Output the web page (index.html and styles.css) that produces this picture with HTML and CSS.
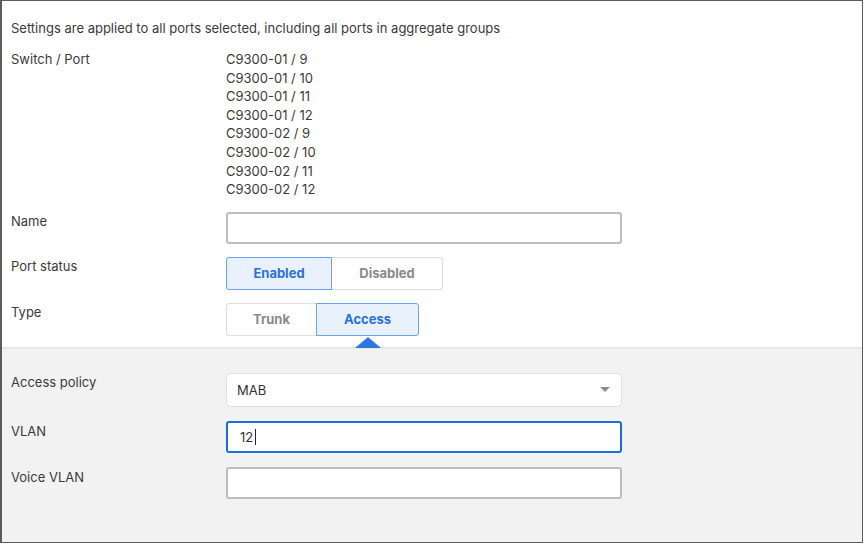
FILE: index.html
```html
<!DOCTYPE html>
<html lang="en">

<head>
    <meta charset="UTF-8">
    <meta name="viewport" content="width=device-width, initial-scale=1.0">
    <title>Port settings</title>
    <link rel="stylesheet" href="styles.css">
</head>

<body>
    <div class="frame">
        <div class="top">
            <p class="note">Settings are applied to all ports selected, including all ports in aggregate groups</p>

            <div class="row ports-row">
                <div class="label">Switch / Port</div>
                <ul class="ports">
                    <li>C9300-01 / 9</li>
                    <li>C9300-01 / 10</li>
                    <li>C9300-01 / 11</li>
                    <li>C9300-01 / 12</li>
                    <li>C9300-02 / 9</li>
                    <li>C9300-02 / 10</li>
                    <li>C9300-02 / 11</li>
                    <li>C9300-02 / 12</li>
                </ul>
            </div>

            <div class="row">
                <div class="label">Name</div>
                <input type="text" class="field">
            </div>

            <div class="row">
                <div class="label">Port status</div>
                <div class="segmented">
                    <button type="button" class="seg seg-enabled active">Enabled</button>
                    <button type="button" class="seg seg-disabled">Disabled</button>
                </div>
            </div>

            <div class="row type-row">
                <div class="label">Type</div>
                <div class="segmented">
                    <button type="button" class="seg seg-trunk">Trunk</button>
                    <button type="button" class="seg seg-access active">Access<span class="pointer"></span></button>
                </div>
            </div>
        </div>

        <div class="bottom">
            <div class="row">
                <div class="label">Access policy</div>
                <div class="select">
                    <span>MAB</span>
                    <span class="caret"></span>
                </div>
            </div>

            <div class="row vlan-row">
                <div class="label">VLAN</div>
                <div class="field-wrap">
                    <input type="text" class="field focused" value="12">
                    <span class="cursor"></span>
                </div>
            </div>

            <div class="row voice-row">
                <div class="label">Voice VLAN</div>
                <input type="text" class="field">
            </div>
        </div>
    </div>
</body>

</html>
```

FILE: styles.css
```css
body {
    margin: 0;
    font-family: Inter, "Noto Sans", sans-serif;
    font-size: 13px;
    color: #3a3a3a;
    background: #fff;
}

.frame {
    width: 863px;
    height: 543px;
    box-sizing: border-box;
    border: 1px solid #5c5c5c;
    border-left-width: 2px;
    display: flex;
    flex-direction: column;
}

.top {
    background: #fff;
    padding: 18px 0 0 9px;
}

.note {
    margin: 0 0 12px;
    line-height: 19px;
}

.row {
    display: grid;
    grid-template-columns: 215px 396px;
    align-items: start;
    margin-bottom: 13px;
}

.label {
    line-height: 19px;
}

.ports-row {
    margin-bottom: 13px;
}

.ports {
    list-style: none;
    margin: 0;
    padding: 0;
    line-height: 18.6px;
}

.field {
    width: 100%;
    height: 32px;
    box-sizing: border-box;
    border: 2px solid #bdbdbd;
    border-radius: 3px;
    background: #fff;
    padding: 0 12px;
    font-family: inherit;
    font-size: 13px;
    color: #333;
    outline: none;
}

.field.focused {
    border-color: #1d6fe0;
}

.segmented {
    display: flex;
    height: 33px;
}

.seg {
    position: relative;
    box-sizing: border-box;
    height: 33px;
    border: 1px solid #dedede;
    background: #fff;
    font-family: inherit;
    font-size: 13px;
    font-weight: 700;
    color: #8a8a8a;
    padding: 0;
}

.seg-enabled {
    width: 106px;
    border-radius: 3px 0 0 3px;
}

.seg-disabled {
    width: 111px;
    border-left: none;
    border-radius: 0 3px 3px 0;
}

.seg-trunk {
    width: 90px;
    border-right: none;
    border-radius: 3px 0 0 3px;
}

.seg-access {
    width: 103px;
    border-radius: 0 3px 3px 0;
}

.seg.active {
    background: #e9f1fd;
    border: 1px solid #6aa2eb;
    color: #2a72d8;
}

.pointer {
    position: absolute;
    left: 50%;
    bottom: -13px;
    margin-left: -13px;
    border-left: 13px solid transparent;
    border-right: 13px solid transparent;
    border-bottom: 11px solid #2b78e2;
}

.type-row {
    margin-bottom: 11px;
}

.bottom {
    flex: 1;
    background: #f2f2f2;
    border-top: 2px solid #e6e6e6;
    padding: 24px 0 0 9px;
}

.bottom .row {
    margin-bottom: 14px;
}

.bottom .label {
    margin-top: 0;
}

.select {
    height: 34px;
    box-sizing: border-box;
    border: 1px solid #e0e0e0;
    border-radius: 4px;
    background: #fff;
    display: flex;
    align-items: center;
    justify-content: space-between;
    padding: 0 11px 0 10px;
    color: #333;
}

.caret {
    border-left: 5px solid transparent;
    border-right: 5px solid transparent;
    border-top: 5px solid #8c8c8c;
}

.field-wrap {
    position: relative;
}

.cursor {
    position: absolute;
    left: 29px;
    top: 8px;
    width: 1px;
    height: 16px;
    background: #222;
}

.vlan-row .label {
    margin-top: 1px;
}

.voice-row .label {
    margin-top: 1px;
}
```
